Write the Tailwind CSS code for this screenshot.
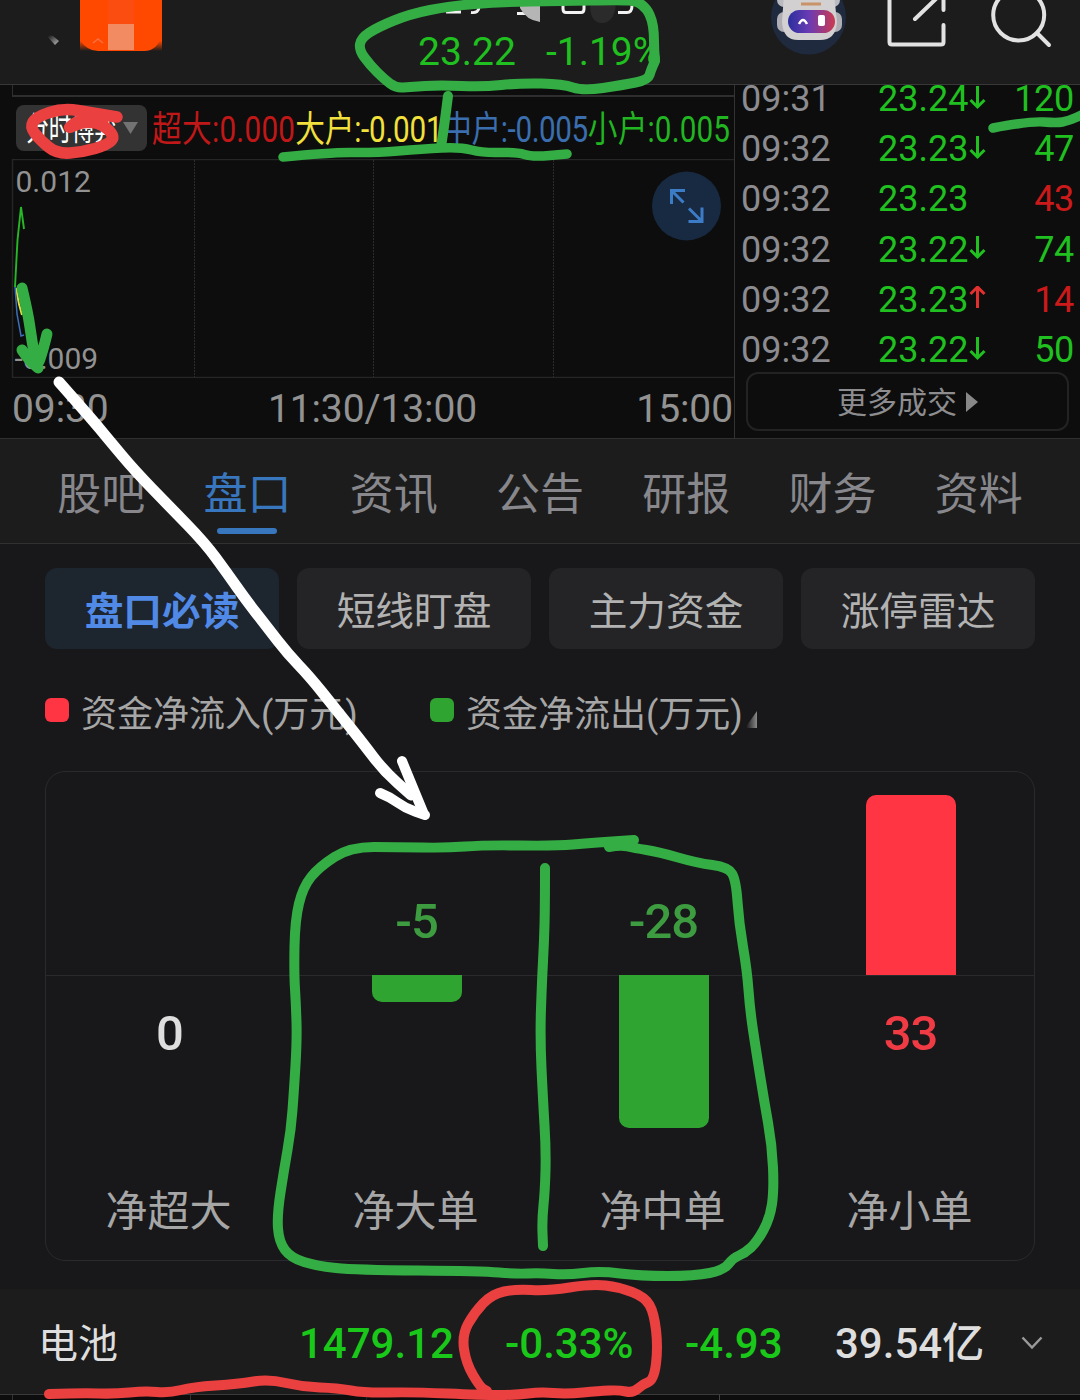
<!DOCTYPE html>
<html lang="zh-CN">
<head>
  <meta charset="UTF-8" />
  <meta name="viewport" content="width=device-width, initial-scale=1.0" />
  <title>盘口 23.22 -1.19%</title>
  <script src="https://cdn.jsdelivr.net/npm/@tailwindcss/browser@4"></script>
  <style>
    body {
      font-family: Roboto, 'Noto Sans CJK SC', sans-serif;
    }
  </style>
</head>
<body class="bg-[#0d0d0d]">
<div class="relative w-[1080px] h-[1400px] overflow-hidden flex flex-col whitespace-nowrap">

  <!-- header -->
  <header class="h-[85px] shrink-0 bg-[#1c1c1c] border-b border-[#383838] flex items-start overflow-hidden">
    <svg class="w-[418px] h-[84px] shrink-0" viewBox="0 0 418 84">
      <defs>
        <linearGradient id="smudge" x1="0" y1="0" x2="1" y2="1">
          <stop offset="0.2" stop-color="#1c1c1c" /><stop offset="1" stop-color="#b8b8b8" />
        </linearGradient>
        <linearGradient id="fade" x1="0" y1="0" x2="0" y2="1">
          <stop offset="0.8" stop-color="#ff4800" /><stop offset="1" stop-color="#ff4800" stop-opacity="0" />
        </linearGradient>
      </defs>
      <path d="M45 34l8 2 6 5-4 4z" fill="url(#smudge)" />
      <path d="M80 0h82v51H80z" fill="url(#fade)" />
      <path d="M80 0h82v34q-4 17-18 17H98q-11 0-18-11z" fill="#ff4800" />
      <path d="M108 0h26v24h-26z" fill="#fb4d10" />
      <path d="M108 24h26v26h-26z" fill="#f28a62" />
      <path d="M93 43l5-4 5 4" stroke="#fa7040" stroke-width="1.500" fill="none" />
    </svg>
    <div class="w-[353px] shrink-0">
      <svg class="w-[240px] h-[25px] block" viewBox="418 0 240 25">
        <g fill="none" stroke="#f2f2f2" stroke-width="3">
          <path d="M446 12h15M453 6v6M471 12.500q8 1 8-6M495 4.500h26M517 13.500h9M563 5v4q0 3.500 3 3.500h15q3 0 3-3.500V5M618 12.500h9q5 0 5-7" />
        </g>
        <path d="M520 3h20v19q-14-2-20-14z" fill="#b5b5b5" />
        <path d="M590 4h26q-2 19-14 19t-12-19z" fill="#2b2b2b" />
      </svg>
      <div class="flex gap-[30px] text-[39px] leading-[54px] text-[#1fc01f]"><span>23.22</span><span>-1.19%</span></div>
    </div>
    <svg class="w-[76px] h-[84px] shrink-0" viewBox="771 0 76 84">
      <defs>
        <linearGradient id="visor"><stop offset="0" stop-color="#2b2f9e" /><stop offset="0.45" stop-color="#6a3bb4" /><stop offset="1" stop-color="#cc3a50" /></linearGradient>
      </defs>
      <circle cx="808.500" cy="17" r="37.500" fill="#1f2a3e" />
      <circle cx="784" cy="0" r="7" fill="#b9bac0" />
      <circle cx="833" cy="0" r="7" fill="#b9bac0" />
      <rect x="777" y="12" width="14" height="20" rx="7" fill="#aeaeb4" />
      <rect x="828" y="12" width="14" height="20" rx="7" fill="#aeaeb4" />
      <path d="M784 -6h50l3 28q-1 18-17 18h-22q-15 0-16-18z" fill="#d2d0d0" />
      <path d="M801 4h20" stroke="#c9936a" stroke-width="3" />
      <rect x="788" y="10" width="47" height="23" rx="11.500" fill="url(#visor)" />
      <path d="M799 24q4-8 8 0" stroke="#fff" stroke-width="2.500" fill="none" />
      <rect x="818" y="15" width="7" height="11" rx="2" fill="#fff" />
    </svg>
    <svg class="w-[233px] h-[84px] shrink-0" viewBox="847 0 233 84" fill="none" stroke="#e2e2e2" stroke-width="4" stroke-linecap="round">
      <path d="M889.500 -4V42q0 2.500 2.500 2.500H941q2.500 0 2.500-2.500V25M943.500 10V-4M915 19L940 -5" />
      <circle cx="1018.700" cy="15" r="25.500" />
      <path d="M1037 33l12 12" />
    </svg>
  </header>

  <!-- intraday chart + trades -->
  <section class="h-[353px] shrink-0 flex bg-[#0d0d0d] overflow-hidden">
    <div class="w-[735px] shrink-0 border-r border-[#333]">
      <div class="ml-3 h-3 border-l border-b-2 border-[#2e2e2e]"></div>
      <div class="h-[62px] pl-4 flex items-center">
        <div class="w-[131px] h-[46px] shrink-0 rounded-lg bg-[#333] flex items-center pl-[10px]">
          <div class="w-[97px] pt-[3px]"><span class="inline-block origin-left scale-x-[0.69] text-[33px] leading-none text-white">分时博弈</span></div>
          <svg class="w-[15px] h-[12px]" viewBox="0 0 15 12"><path d="M0 0h15L7.500 12z" fill="#737373" /></svg>
        </div>
        <div class="w-[580px] pl-[5px] pt-[3px]">
          <div class="inline-flex origin-left scale-x-[0.824] text-[36px] leading-[46px]">
            <span class="text-[#c01818] tracking-[0.35px]">超大:0.000</span><span class="text-[#f2e03c] tracking-[-0.3px]">大户:-0.001</span><span class="text-[#3b6eae] tracking-[-0.5px]">中户:-0.005</span><span class="text-[#22b522] tracking-[0.2px]">小户:0.005</span>
          </div>
        </div>
      </div>
      <svg class="block w-[734px] h-[219px]" viewBox="0 159 734 219" fill="none">
        <path d="M734 159.500H12.500V377.500H734" stroke="#262626" stroke-width="1.500" />
        <path d="M194.500 160V377M373.500 160V377M553.500 160V377" stroke="#2c2c2c" stroke-dasharray="2 1" />
        <g font-size="30" fill="#929292">
          <text x="15.500" y="192">0.012</text>
          <text x="14.500" y="369">-0.009</text>
        </g>
        <path d="M16 288l3 16 3 11" stroke="#e8e040" stroke-width="2" />
        <path d="M15 286l2 28 4 22 3-1" stroke="#3a70b8" stroke-width="1.500" />
        <path d="M15 287l2.500-47 3.500-33 3 22" stroke="#27b827" stroke-width="1.900" />
        <circle cx="686.500" cy="206" r="34.500" fill="#182a41" />
        <path d="M671.500 204v-13.500H685M671.500 190.500l12 12M702 207.500v14H688.500M702 221.500l-13-13" stroke="#3c7cc6" stroke-width="3" />
      </svg>
      <div class="flex justify-between pl-3 pr-px text-[39px] leading-[63px] tracking-[-0.1px] text-[#929292]">
        <span>09:30</span><span>11:30/13:00</span><span>15:00</span>
      </div>
    </div>
    <div class="flex-1 flex flex-col">
      <div id="trades" class="h-[287px] -mt-[11px] shrink-0 text-[36px] text-[#8b8b90]"></div>
      <div class="mt-[11px] ml-[11px] w-[323px] h-[59px] shrink-0 rounded-xl border-2 border-[#232323] flex items-center justify-center gap-[9px] text-[30px] text-[#8d8d90]">
        <span class="pt-[2px]">更多成交</span>
        <svg class="w-3 h-5" viewBox="0 0 12 20"><path d="M0 0l12 10L0 20z" fill="#888" /></svg>
      </div>
    </div>
  </section>

  <!-- tabs -->
  <nav class="h-[106px] shrink-0 border-y border-[#303030] bg-[#1c1c1c] px-7 grid grid-cols-7 text-center text-[44px] leading-[64px] pt-[24px] text-[#87878c]">
    <span>股吧</span>
    <span class="flex flex-col items-center text-[#3876bd]">盘口<i class="mt-px w-[60px] h-[6px] shrink-0 rounded-full bg-[#3876bd]"></i></span>
    <span>资讯</span>
    <span>公告</span>
    <span>研报</span>
    <span>财务</span>
    <span>资料</span>
  </nav>

  <main class="h-[745px] shrink-0 bg-[#18181a] px-[45px] pt-6">
    <div class="grid grid-cols-4 gap-[18px] text-center text-[38.700px] leading-[75px] text-[#b2b2b2]">
      <span class="pt-[6px] rounded-xl bg-[#1d252f] text-[#5189e6] font-bold">盘口必读</span>
      <span class="pt-[6px] rounded-xl bg-[#242426]">短线盯盘</span>
      <span class="pt-[6px] rounded-xl bg-[#242426]">主力资金</span>
      <span class="pt-[6px] rounded-xl bg-[#242426]">涨停雷达</span>
    </div>
    <div class="mt-[34px] h-[56px] flex items-center text-[36px] text-[#a6a6a6]">
      <i class="size-6 mt-[-2px] mr-[12px] rounded-md bg-[#ff3543]"></i><span class="w-[349px] mt-[7px]">资金净流入(万元)</span>
      <i class="size-6 mt-[-2px] mr-[12px] rounded-md bg-[#30a430]"></i><span class="mt-[7px]">资金净流出(万元)</span>
      <svg class="w-[14px] h-[18px] mt-[16px]" viewBox="0 0 14 18">
        <defs><linearGradient id="corner"><stop offset="0.1" stop-color="#18181a" /><stop offset="1" stop-color="#8a8a8a" /></linearGradient></defs>
        <path d="M14 1v17H2z" fill="url(#corner)" />
      </svg>
    </div>
    <div id="flow" class="mt-8 h-[490px] rounded-[20px] border border-[#2a2a2c] grid grid-cols-4"></div>
  </main>

  <!-- sector strip -->
  <footer class="h-[106px] shrink-0 bg-[#1c1c1c] border-b border-[#3a3a3a] pt-[3px] flex items-center text-[42px] font-medium text-[#19c819]">
    <span class="w-[299px] pl-[38px] pt-[3px] text-[40px] font-normal text-[#dedede]">电池</span>
    <span class="w-[206px]">1479.12</span>
    <span class="w-[180px]">-0.33%</span>
    <span class="w-[150px]">-4.93</span>
    <span class="w-[186px] text-[#dedede]">39.54亿</span>
    <svg class="w-[22px] h-[14px]" viewBox="0 0 22 14"><path d="M1.500 1.500L11 11.500l9.500-10" fill="none" stroke="#999" stroke-width="2.500" /></svg>
  </footer>
  <div class="flex-1 flex bg-[#0d0d0d]">
    <i class="w-[13px] border-r border-[#333]"></i>
    <i class="w-[178px] border-r border-dashed border-[#333]"></i>
    <i class="w-[176px] border-r border-dashed border-[#222]"></i>
    <i class="w-[353px] border-r border-[#444]"></i>
  </div>

  <!-- hand-drawn marks, on top of everything -->
  <svg id="marks" class="absolute inset-0 w-[1080px] h-[1400px]" viewBox="0 0 1080 1400" fill="none" stroke-linecap="round" stroke-linejoin="round"></svg>
</div>

<script>
  const trades = [
    ["09:31", "23.24", "down", 120, "g"],
    ["09:32", "23.23", "down", 47, "g"],
    ["09:32", "23.23", "", 43, "r"],
    ["09:32", "23.22", "down", 74, "g"],
    ["09:32", "23.23", "up", 14, "r"],
    ["09:32", "23.22", "down", 50, "g"]
  ];
  const arrows = {
    down: '<path d="M9.500 0v21M2.500 14l7 7 7-7" stroke="#1fc01f" />',
    up: '<path d="M9.500 22V1M2.500 8l7-7 7 7" stroke="#e03030" />',
    "": ""
  };
  document.getElementById("trades").innerHTML = trades.map(([time, price, dir, vol, c]) => `
    <div class="h-[50.200px] flex items-center pl-[6px] pr-[6px]">
      <span class="w-[137px]">${time}</span>
      <span class="text-[#1fc01f]">${price}</span>
      <svg class="w-[18px] h-6 -mt-[3px]" viewBox="0 0 18 24" fill="none" stroke-width="3">${arrows[dir]}</svg>
      <span class="ml-auto tracking-[-0.3px] ${c === "g" ? "text-[#1fc01f]" : "text-[#cc1a1a]"}">${vol}</span>
    </div>`).join("");

  const flow = [["净超大", 0], ["净大单", -5], ["净中单", -28], ["净小单", 33]];
  const unit = 180 / 33;
  document.getElementById("flow").innerHTML = flow.map(([name, v]) => {
    const h = Math.abs(v) * unit;
    const color = v > 0 ? "text-[#f03b44]" : v < 0 ? "text-[#3d9c40]" : "text-[#dedede]";
    const num = `<span class="text-[49px] font-medium leading-[60px] tracking-[-1px] ${color}">${v}</span>`;
    return `
    <div class="flex flex-col items-center">
      <div class="h-[204px] w-full flex flex-col items-center justify-end border-b border-[#2a2a2c] ${v < 0 ? "pb-[23px]" : ""}">
        ${v < 0 ? num : ""}${v > 0 ? `<i class="w-[90px] rounded-t-[10px] bg-[#ff3543]" style="height:${h}px"></i>` : ""}
      </div>
      <div class="h-[203px] flex flex-col items-center ${v >= 0 ? "pt-[28px]" : ""}">
        ${v < 0 ? `<i class="w-[90px] -mt-px rounded-b-[10px] bg-[#30a430]" style="height:${h}px"></i>` : num}
      </div>
      <span class="-ml-[2px] text-[42px] leading-[66px] text-[#a6a6a6]">${name}</span>
    </div>`;
  }).join("");

  const green = "#34ad45", red = "#ea4040", white = "#fff";
  const strokes = [
    [green, 10, "655,61 654,50 654,33 652,20 647,9 637,1 620,0 560,1 500,2 450,6 410,14 378,27 361,38 359,50 370,65 384,79 396,88 410,87 440,85 483,87 520,83 563,84 583,91 623,85 648,80 651,70 655,61"],
    [green, 9.5, "283,157 333,152 373,153 423,149 460,147 483,153 517,152 532,157 567,154"],
    [green, 10, "448,96 445,120 441,147"],
    [green, 9.5, "993,128 1030,121 1057,123 1068,121 1084,114"],
    [green, 11, "22,288 28,313 32,342 37,368 43,350 47,334"],
    [green, 11, "22,350 29,360 38,368"],
    [red, 11.5, "117,117 93,113 63,108 36,117 30,127 40,140 57,154 83,152 107,145 115,137 103,124 83,121 65,130 84,117 104,118"],
    [white, 11, "59,382 90,417 109,440 135,471 170,507 205,543 227,573 246,600 267,627 288,654 310,677 334,707 362,742 384,771 411,795"],
    [white, 10, "402,761 411,783 423,812"],
    [white, 10, "380,793 390,797 405,808 425,815"],
    [green, 10, "609,847 621,845 634,848 659,852 697,863 728,867 736,880 739,923 747,970 750,1010 756,1050 764,1100 772,1145 774,1190 770,1218 757,1242 745,1253 733,1258 724,1270 695,1276 640,1276 600,1271 567,1275 540,1273 516,1274 482,1271 355,1270 317,1266 291,1258 279,1242 277,1215 284,1170 291,1130 294,1090 297,1040 296,1005 294,973 295,920 303,887 319,867 350,847 398,847 446,848 484,845 556,846 590,843 634,840"],
    [green, 10, "545,868 545,907 544,943 542,980 540,1037 543,1100 546,1150 545,1190 542,1220 543,1246"],
    [red, 10, "49,1394 83,1393 114,1394 145,1391 169,1393 193,1387 238,1384 269,1379 303,1387 337,1388 365,1393 413,1392 482,1395 516,1395 540,1392 567,1394 599,1391 619,1390 633,1393 643,1384 654,1380 658,1347 654,1313 645,1297 619,1287 592,1284 547,1291 516,1289 492,1294 474,1313 462,1335 466,1363 480,1387 487,1391"]
  ];

  // smooth each stroke through the midpoints of its segments
  document.getElementById("marks").innerHTML = strokes.map(([color, w, s]) => {
    const p = s.split(" ").map(q => q.split(",").map(Number));
    let d = `M${p[0]}`;
    for (let i = 1; i < p.length - 1; i++) {
      d += `Q${p[i]} ${(p[i][0] + p[i + 1][0]) / 2},${(p[i][1] + p[i + 1][1]) / 2}`;
    }
    d += `L${p[p.length - 1]}`;
    return `<path d="${d}" stroke="${color}" stroke-width="${w}" />`;
  }).join("");
</script>
</body>
</html>
